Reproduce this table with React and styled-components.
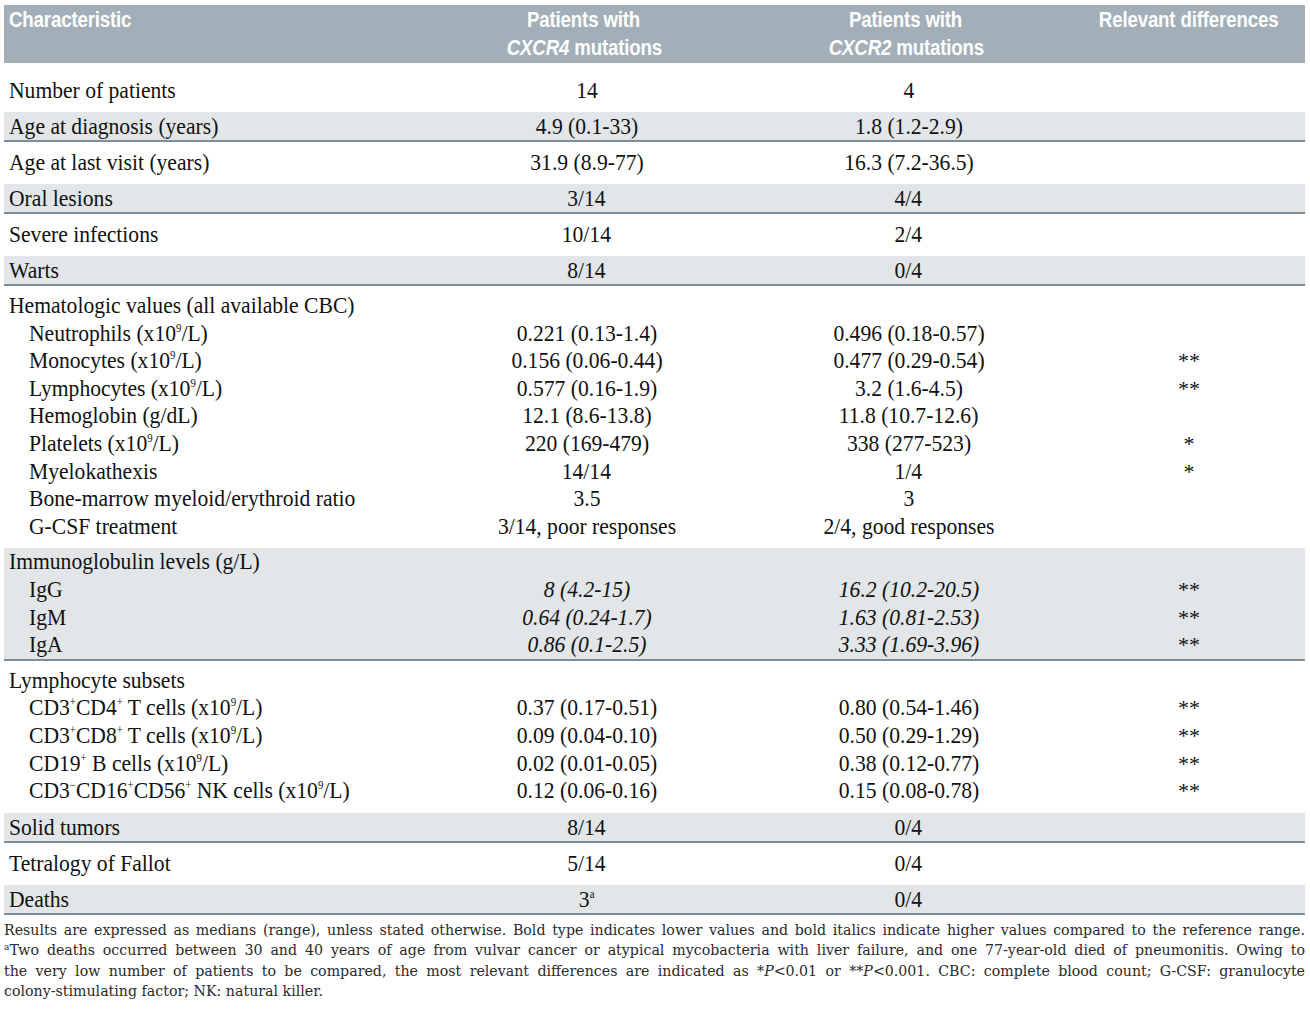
import React from 'react';
import styled, {createGlobalStyle} from 'styled-components';

const GlobalStyle=createGlobalStyle`
	body{
		margin:0;
		background:#fff;
	}
`;

const COLS='420px 320px 324px 1fr';

const Page=styled.div`
	width:1301px;
	padding:5px 5px 0 4px;
	font-family:"Liberation Serif","Times New Roman",serif;
	color:#111;
`;

const HeaderRow=styled.div`
	display:grid;
	grid-template-columns:${COLS};
	height:57px;
	padding-top:1px;
	background:#a3afb8;
	color:#fff;
	font-family:"Liberation Sans",Arial,sans-serif;
	font-weight:bold;
	font-size:22px;
	line-height:28px;
	letter-spacing:-0.2px;
`;

const HeadCell=styled.div`
	text-align:${p=>p.$align||'center'};
	padding-left:${p=>p.$pad||0}px;
`;

// condensed look: draw wider and squeeze horizontally
const Squeeze=styled.span`
	display:inline-block;
	white-space:nowrap;
	transform:scaleX(${p=>p.$k||0.9});
	transform-origin:${p=>p.$left?'left':'center'} center;
`;

const Group=styled.div`
	background:${p=>p.$shaded?'#e2e6e9':'#fff'};
	border-bottom:${p=>p.$shaded?'2px solid #7d8e99':'none'};
	padding:${p=>p.$shaded?'0':(p.$first?'13px 0 8px':'6px 0 8px')};
`;

const Line=styled.div`
	display:grid;
	grid-template-columns:${COLS};
	font-size:24px;
	line-height:${p=>p.$multi?'27.6px':'28px'};
	height:${p=>p.$multi?'27.6px':'28px'};
	white-space:nowrap;
`;

const Cell=styled.div`
	text-align:${p=>p.$align||'center'};
	padding-left:${p=>p.$indent?25:5}px;
	font-style:${p=>p.$italic?'italic':'normal'};
`;

const Mark=styled(Cell)`
	padding-left:5px;
	font-size:22px;
`;

const Sup=styled.span`
	font-size:12px;
	line-height:0;
	position:relative;
	top:-9px;
`;

const Notes=styled.div`
	margin-top:5px;
	font-family:"DejaVu Serif","Liberation Serif",serif;
	font-size:14.2px;
	line-height:20.4px;
	color:#2a2a2a;
`;

const NoteLine=styled.div`
	white-space:nowrap;
	text-align:justify;
	text-align-last:${p=>p.$last?'left':'justify'};
`;

const NoteSup=styled.span`
	font-size:9px;
	position:relative;
	top:-5px;
	line-height:0;
`;

const X9=()=>(<>(x10<Sup>9</Sup>/L)</>);

function Row({label,a,b,mark,indent,italic,multi})
{
	return(
		<Line $multi={multi}>
			<Cell $align="left" $indent={indent}><Squeeze $left>{label}</Squeeze></Cell>
			<Cell $italic={italic}>{a&&<Squeeze>{a}</Squeeze>}</Cell>
			<Cell $italic={italic}>{b&&<Squeeze>{b}</Squeeze>}</Cell>
			<Mark>{mark}</Mark>
		</Line>
	)
}

export default function App()
{
	return(
		<Page>
			<GlobalStyle/>
			<HeaderRow>
				<HeadCell $align="left" $pad={5}><Squeeze $left $k={0.85}>Characteristic</Squeeze></HeadCell>
				<HeadCell><Squeeze $k={0.85}>Patients with</Squeeze><br/><Squeeze $k={0.85}><i>CXCR4</i> mutations</Squeeze></HeadCell>
				<HeadCell><Squeeze $k={0.85}>Patients with</Squeeze><br/><Squeeze $k={0.85}><i>CXCR2</i> mutations</Squeeze></HeadCell>
				<HeadCell $pad={5}><Squeeze $k={0.85}>Relevant differences</Squeeze></HeadCell>
			</HeaderRow>

			<Group $first><Row label="Number of patients" a="14" b="4"/></Group>
			<Group $shaded><Row label="Age at diagnosis (years)" a="4.9 (0.1-33)" b="1.8 (1.2-2.9)"/></Group>
			<Group><Row label="Age at last visit (years)" a="31.9 (8.9-77)" b="16.3 (7.2-36.5)"/></Group>
			<Group $shaded><Row label="Oral lesions" a="3/14" b="4/4"/></Group>
			<Group><Row label="Severe infections" a="10/14" b="2/4"/></Group>
			<Group $shaded><Row label="Warts" a="8/14" b="0/4"/></Group>

			<Group>
				<Row multi label="Hematologic values (all available CBC)"/>
				<Row multi indent label={<>Neutrophils <X9/></>} a="0.221 (0.13-1.4)" b="0.496 (0.18-0.57)"/>
				<Row multi indent label={<>Monocytes <X9/></>} a="0.156 (0.06-0.44)" b="0.477 (0.29-0.54)" mark="**"/>
				<Row multi indent label={<>Lymphocytes <X9/></>} a="0.577 (0.16-1.9)" b="3.2 (1.6-4.5)" mark="**"/>
				<Row multi indent label="Hemoglobin (g/dL)" a="12.1 (8.6-13.8)" b="11.8 (10.7-12.6)"/>
				<Row multi indent label={<>Platelets <X9/></>} a="220 (169-479)" b="338 (277-523)" mark="*"/>
				<Row multi indent label="Myelokathexis" a="14/14" b="1/4" mark="*"/>
				<Row multi indent label="Bone-marrow myeloid/erythroid ratio" a="3.5" b="3"/>
				<Row multi indent label="G-CSF treatment" a="3/14, poor responses" b="2/4, good responses"/>
			</Group>

			<Group $shaded>
				<Row multi label="Immunoglobulin levels (g/L)"/>
				<Row multi indent italic label="IgG" a="8 (4.2-15)" b="16.2 (10.2-20.5)" mark="**"/>
				<Row multi indent italic label="IgM" a="0.64 (0.24-1.7)" b="1.63 (0.81-2.53)" mark="**"/>
				<Row multi indent italic label="IgA" a="0.86 (0.1-2.5)" b="3.33 (1.69-3.96)" mark="**"/>
			</Group>

			<Group>
				<Row multi label="Lymphocyte subsets"/>
				<Row multi indent label={<>CD3<Sup>+</Sup>CD4<Sup>+</Sup> T cells <X9/></>} a="0.37 (0.17-0.51)" b="0.80 (0.54-1.46)" mark="**"/>
				<Row multi indent label={<>CD3<Sup>+</Sup>CD8<Sup>+</Sup> T cells <X9/></>} a="0.09 (0.04-0.10)" b="0.50 (0.29-1.29)" mark="**"/>
				<Row multi indent label={<>CD19<Sup>+</Sup> B cells <X9/></>} a="0.02 (0.01-0.05)" b="0.38 (0.12-0.77)" mark="**"/>
				<Row multi indent label={<>CD3<Sup>&minus;</Sup>CD16<Sup>+</Sup>CD56<Sup>+</Sup> NK cells <X9/></>} a="0.12 (0.06-0.16)" b="0.15 (0.08-0.78)" mark="**"/>
			</Group>

			<Group $shaded><Row label="Solid tumors" a="8/14" b="0/4"/></Group>
			<Group><Row label="Tetralogy of Fallot" a="5/14" b="0/4"/></Group>
			<Group $shaded><Row label="Deaths" a={<>3<Sup>a</Sup></>} b="0/4"/></Group>

			<Notes>
				<NoteLine>Results are expressed as medians (range), unless stated otherwise. Bold type indicates lower values and bold italics indicate higher values compared to the reference range.</NoteLine>
				<NoteLine><NoteSup>a</NoteSup>Two deaths occurred between 30 and 40 years of age from vulvar cancer or atypical mycobacteria with liver failure, and one 77-year-old died of pneumonitis. Owing to</NoteLine>
				<NoteLine>the very low number of patients to be compared, the most relevant differences are indicated as *<i>P</i>&lt;0.01 or **<i>P</i>&lt;0.001. CBC: complete blood count; G-CSF: granulocyte</NoteLine>
				<NoteLine $last>colony-stimulating factor; NK: natural killer.</NoteLine>
			</Notes>
		</Page>
	)
}
